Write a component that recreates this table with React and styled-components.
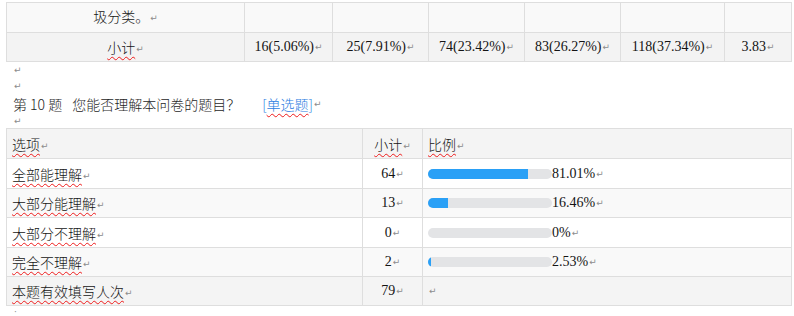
import styled, { createGlobalStyle } from "styled-components";

const GlobalStyle = createGlobalStyle`
  html, body { margin: 0; background: #fff; }
`;

const Page = styled.div`
  width: 794px;
  height: 316px;
  overflow: hidden;
  box-sizing: border-box;
  padding: 2px 0 0 6px;
  font-family: "Liberation Serif", "Noto Sans CJK SC", serif;
  font-size: 14px;
  color: #141414;
`;

const Table = styled.table`
  width: ${(p) => p.$w}px;
  border-collapse: collapse;
  table-layout: fixed;
`;

const Row = styled.tr`
  height: ${(p) => p.$h || 30}px;
  background: ${(p) => p.$bg || "#fff"};
`;

const Cell = styled.td`
  border: 1px solid #dedede;
  padding: ${(p) => (p.$top ? "3px 5px 0" : "0 5px")};
  text-align: ${(p) => p.$align || "left"};
  vertical-align: ${(p) => (p.$top ? "top" : "middle")};
  white-space: nowrap;
  overflow: hidden;
  font-family: ${(p) =>
    p.$cjk ? '"Noto Sans CJK SC", sans-serif' : "inherit"};
  font-weight: ${(p) => (p.$cjk ? 300 : 400)};
`;

const EndCell = styled.td`
  background: #fff;
  padding: 5px 0 0 2px;
  vertical-align: top;
  overflow: hidden;
`;

const Mark = styled.span`
  font-family: "DejaVu Sans", sans-serif;
  font-weight: 400;
  font-size: 9px;
  color: #8c8c8c;
  margin-left: 1px;
  vertical-align: 1px;
`;

const Wavy = styled.span`
  text-decoration: underline wavy #ee1c1c;
  text-decoration-thickness: 1px;
  text-decoration-skip-ink: none;
  text-underline-offset: 3px;
`;

const Para = styled.div`
  height: ${(p) => p.$h}px;
  display: flex;
  align-items: center;
  padding-left: 7px;
  font-family: "Noto Sans CJK SC", sans-serif;
  font-weight: 300;
  font-size: 14px;
  color: #1e1e1e;
`;

const Gap = styled.span`
  display: inline-block;
  width: ${(p) => p.$w}px;
`;

const Link = styled.span`
  color: #2a7de1;
`;

const Track = styled.span`
  display: inline-block;
  width: 124px;
  height: 10px;
  border-radius: 5px;
  background: #e3e4e6;
  overflow: hidden;
  vertical-align: -1px;
`;

const Fill = styled.span`
  display: block;
  height: 100%;
  background: #2aa0f6;
`;

const topWidths = [238, 88, 96, 96, 96, 104, 67, 10];
const topCounts = [
  "16(5.06%)",
  "25(7.91%)",
  "74(23.42%)",
  "83(26.27%)",
  "118(37.34%)",
  "3.83",
];

const qWidths = [356, 60, 369, 10];

const options = [
  { label: "全部能理解", count: 64, pct: 81.01, text: "81.01%" },
  { label: "大部分能理解", count: 13, pct: 16.46, text: "16.46%" },
  { label: "大部分不理解", count: 0, pct: 0, text: "0%" },
  { label: "完全不理解", count: 2, pct: 2.53, text: "2.53%" },
];

const sum = (a) => a.reduce((s, v) => s + v, 0);

const Cols = ({ widths }) => (
  <colgroup>
    {widths.map((w, i) => (
      <col key={i} style={{ width: w }} />
    ))}
  </colgroup>
);

const End = () => (
  <EndCell>
    <Mark>↵</Mark>
  </EndCell>
);

const App = () => {
  return (
    <Page>
      <GlobalStyle />
      <Table $w={sum(topWidths)}>
        <Cols widths={topWidths} />
        <tbody>
          <Row $h={30} $bg="#f9f9f9">
            <Cell $align="center" $top $cjk>
              圾分类。<Mark>↵</Mark>
            </Cell>
            {topCounts.map((_, i) => (
              <Cell key={i} />
            ))}
            <End />
          </Row>
          <Row $h={29} $bg="#f3f3f3">
            <Cell $align="center" $cjk>
              <Wavy>小计</Wavy>
              <Mark>↵</Mark>
            </Cell>
            {topCounts.map((c) => (
              <Cell key={c} $align="center">
                {c}
                <Mark>↵</Mark>
              </Cell>
            ))}
            <End />
          </Row>
        </tbody>
      </Table>

      <Para $h={16}>
        <Mark>↵</Mark>
      </Para>
      <Para $h={16}>
        <Mark>↵</Mark>
      </Para>
      <Para $h={20}>
        第 10 题<Gap $w={10} />您能否理解本问卷的题目？<Gap $w={22} />
        <Link>
          [<Wavy>单选题</Wavy>]
        </Link>
        <Mark>↵</Mark>
      </Para>
      <Para $h={14}>
        <Mark>↵</Mark>
      </Para>

      <Table $w={sum(qWidths)}>
        <Cols widths={qWidths} />
        <tbody>
          <Row $bg="#f4f4f4">
            <Cell $cjk>
              <Wavy>选项</Wavy>
              <Mark>↵</Mark>
            </Cell>
            <Cell $align="center" $cjk>
              <Wavy>小计</Wavy>
              <Mark>↵</Mark>
            </Cell>
            <Cell $cjk>
              <Wavy>比例</Wavy>
              <Mark>↵</Mark>
            </Cell>
            <End />
          </Row>
          {options.map((o, i) => (
            <Row
              key={o.label}
              $h={i % 2 ? 29 : 30}
              $bg={i % 2 ? "#f9f9f9" : "#fff"}
            >
              <Cell $cjk>
                <Wavy>{o.label}</Wavy>
                <Mark>↵</Mark>
              </Cell>
              <Cell $align="center">
                {o.count}
                <Mark>↵</Mark>
              </Cell>
              <Cell>
                <Track>
                  <Fill style={{ width: `${o.pct}%` }} />
                </Track>
                {o.text}
                <Mark>↵</Mark>
              </Cell>
              <End />
            </Row>
          ))}
          <Row $h={29} $bg="#f4f4f4">
            <Cell $cjk>
              <Wavy>本题有效填写人次</Wavy>
              <Mark>↵</Mark>
            </Cell>
            <Cell $align="center">
              79<Mark>↵</Mark>
            </Cell>
            <Cell>
              <Mark>↵</Mark>
            </Cell>
            <End />
          </Row>
        </tbody>
      </Table>
      <Para $h={12}>
        <Mark>·</Mark>
      </Para>
    </Page>
  );
};

export default App;
